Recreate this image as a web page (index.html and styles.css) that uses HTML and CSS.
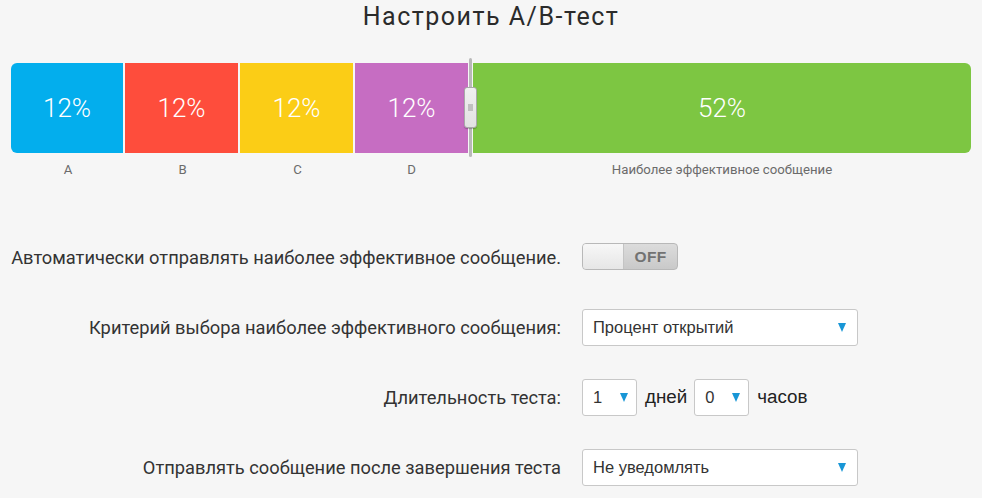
FILE: index.html
```html
<!DOCTYPE html>
<html lang="ru">
<head>
<meta charset="utf-8">
<title>Настроить A/B-тест</title>
<link rel="stylesheet" href="styles.css">
</head>
<body>
<div class="page">
  <h1 class="title">Настроить A/B-тест</h1>

  <div class="bar">
    <div class="seg seg-a">12%</div>
    <div class="seg seg-b">12%</div>
    <div class="seg seg-c">12%</div>
    <div class="seg seg-d">12%</div>
    <div class="divider">
      <div class="knob"><span class="grip"></span></div>
    </div>
    <div class="seg seg-win">52%</div>
  </div>

  <div class="bar-labels">
    <div class="lbl lbl-a">A</div>
    <div class="lbl lbl-b">B</div>
    <div class="lbl lbl-c">C</div>
    <div class="lbl lbl-d">D</div>
    <div class="lbl-div"></div>
    <div class="lbl lbl-win">Наиболее эффективное сообщение</div>
  </div>

  <div class="form">
    <div class="label">Автоматически отправлять наиболее эффективное сообщение.</div>
    <div class="control">
      <div class="toggle">
        <span class="toggle-knob"></span>
        <span class="toggle-text">OFF</span>
      </div>
    </div>

    <div class="label">Критерий выбора наиболее эффективного сообщения:</div>
    <div class="control">
      <div class="select wide"><span>Процент открытий</span><i class="arrow"></i></div>
    </div>

    <div class="label">Длительность теста:</div>
    <div class="control">
      <div class="select small"><span>1</span><i class="arrow"></i></div>
      <span class="unit">дней</span>
      <div class="select small"><span>0</span><i class="arrow"></i></div>
      <span class="unit">часов</span>
    </div>

    <div class="label">Отправлять сообщение после завершения теста</div>
    <div class="control">
      <div class="select wide"><span>Не уведомлять</span><i class="arrow"></i></div>
    </div>
  </div>
</div>
</body>
</html>
```

FILE: styles.css
```css
html, body {
  margin: 0;
  padding: 0;
}
body {
  background: #f6f6f6;
  font-family: Roboto, "Noto Sans", sans-serif;
  color: #333;
  width: 982px;
  height: 498px;
  overflow: hidden;
}
.page {
  width: 982px;
}
.title {
  margin: 0;
  font-weight: 400;
  font-size: 25px;
  line-height: 33px;
  text-align: center;
  color: #2b2b2b;
  letter-spacing: 1.5px;
}

/* distribution bar */
.bar {
  margin: 30px 0 0 11px;
  width: 960px;
  height: 90px;
  display: flex;
}
.seg {
  height: 90px;
  display: flex;
  align-items: center;
  justify-content: center;
  color: #fff;
  font-size: 26px;
  font-weight: 300;
}
.seg-a { width: 112px; background: #03aeed; border-radius: 6px 0 0 6px; margin-right: 2px; }
.seg-b { width: 113px; background: #fe4d3c; margin-right: 2px; }
.seg-c { width: 113px; background: #fbcd16; margin-right: 2px; }
.seg-d { width: 113px; background: #c66dc2; }
.seg-win { width: 498px; background: #7dc642; border-radius: 0 6px 6px 0; }

.divider {
  width: 5px;
  margin: -5px 0 -4px;
  display: flex;
  justify-content: center;
  position: relative;
}
.divider::before {
  content: "";
  display: block;
  width: 3px;
  height: 100%;
  background: #b9b9b9;
  border-radius: 2px;
}
.knob {
  position: absolute;
  left: -4px;
  top: 29px;
  width: 11px;
  height: 39px;
  background: linear-gradient(#f0f0f0, #e2e2e2);
  border: 1px solid #a9a9a9;
  border-radius: 3px;
  box-shadow: 0 1px 1px rgba(0,0,0,0.25);
  display: flex;
  align-items: center;
  justify-content: center;
}
.grip {
  width: 5px;
  height: 7px;
  background: #c0c0c0;
}

/* labels under bar */
.bar-labels {
  margin: 8px 0 0 11px;
  width: 960px;
  display: flex;
  font-size: 13.2px;
  line-height: 18px;
  color: #6b6b6b;
}
.lbl { text-align: center; }
.lbl-a { width: 114px; }
.lbl-b { width: 115px; }
.lbl-c { width: 115px; }
.lbl-d { width: 113px; }
.lbl-div { width: 5px; }
.lbl-win { width: 498px; }

/* form */
.form {
  margin-top: 43px;
  display: grid;
  grid-template-columns: 550px 1fr;
  grid-auto-rows: 70px;
  column-gap: 21px;
  padding-left: 11px;
}
.label {
  display: flex;
  align-items: center;
  justify-content: flex-end;
  font-size: 18.3px;
  color: #333;
  white-space: nowrap;
}
.control {
  display: flex;
  align-items: center;
  font-family: "Liberation Sans", Arial, sans-serif;
}

.toggle {
  width: 94px;
  height: 25px;
  border: 1px solid #b8b8b8;
  border-radius: 4px;
  display: flex;
  overflow: hidden;
  background: linear-gradient(#dcdcdc, #c9c9c9);
  margin-top: -1px;
}
.toggle-knob {
  width: 40px;
  height: 100%;
  background: linear-gradient(#f7f7f7, #e6e6e6);
  border-right: 1px solid #c4c4c4;
}
.toggle-text {
  flex: 1;
  display: flex;
  align-items: center;
  justify-content: center;
  font-weight: 700;
  font-size: 15.5px;
  color: #727272;
  letter-spacing: 0.3px;
}

.select {
  height: 35px;
  background: #fff;
  border: 1px solid #c8c8c8;
  border-radius: 3px;
  display: flex;
  align-items: center;
  justify-content: space-between;
  padding: 0 11px 0 10px;
  font-size: 16.5px;
  color: #333;
  box-sizing: content-box;
}
.select.wide { width: 253px; }
.select.small { width: 35px; padding-right: 8px; }
.arrow {
  width: 0;
  height: 0;
  border-left: 4.5px solid transparent;
  border-right: 4.5px solid transparent;
  border-top: 9px solid #1896d6;
}
.unit {
  font-size: 18.8px;
  color: #222;
  margin: 0 7px 0 8px;
}
```
